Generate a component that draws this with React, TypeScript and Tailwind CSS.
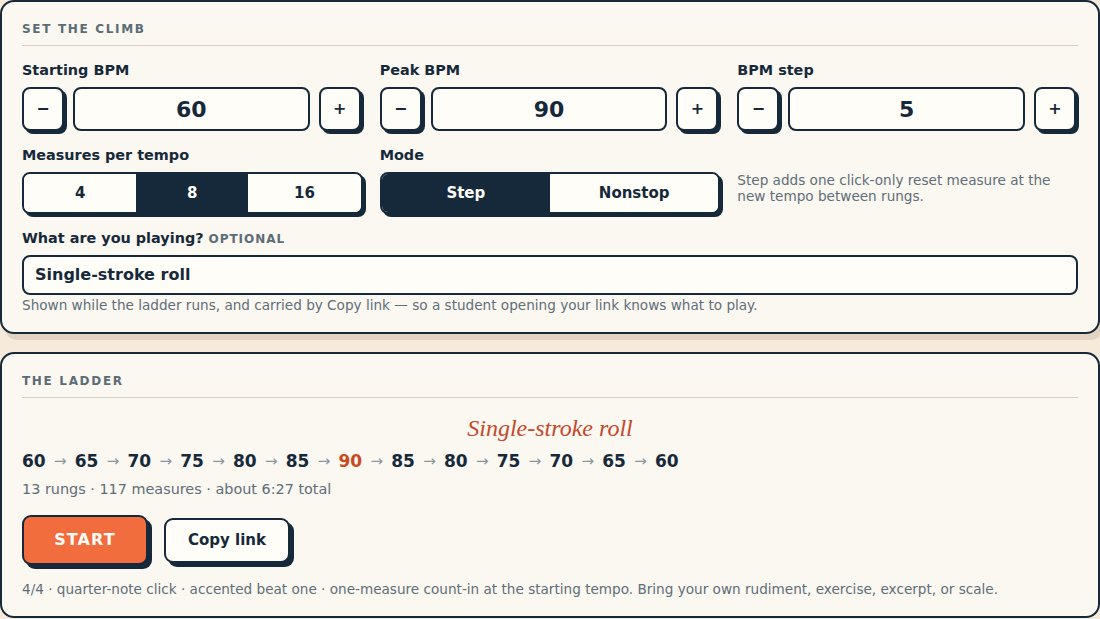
import { useState } from 'react';

const ink = 'text-[#16293a]';

function SectionHead({ title }: { title: string }) {
  return (
    <div className="border-b border-[#d8cfc3] pb-[9px]">
      <h2 className="text-[12px] font-bold uppercase leading-[14px] tracking-[0.14em] text-[#5b6c77]">{title}</h2>
    </div>
  );
}

function Label({ children }: { children: React.ReactNode }) {
  return <div className={`mb-[8px] h-[17px] text-[14.4px] font-bold leading-[17px] ${ink}`}>{children}</div>;
}

function Stepper({ label, value }: { label: string; value: number }) {
  return (
    <div>
      <Label>{label}</Label>
      <div className="mr-[2px] grid grid-cols-[42px_1fr_42px] gap-[9px]">
        <button className={`h-[44px] rounded-[8px] border-2 border-[#16293a] bg-[#fffdf8] text-[16px] font-bold shadow-[3px_3px_0_#16293a] ${ink}`}>
          −
        </button>
        <div className={`flex h-[44px] items-center justify-center rounded-[8px] border-2 border-[#16293a] bg-[#fffdf8] text-[22px] font-bold ${ink}`}>
          {value}
        </div>
        <button className={`h-[44px] rounded-[8px] border-2 border-[#16293a] bg-[#fffdf8] text-[16px] font-bold shadow-[3px_3px_0_#16293a] ${ink}`}>
          +
        </button>
      </div>
    </div>
  );
}

function Segmented({ options, active }: { options: string[]; active: string }) {
  return (
    <div className="flex h-[42px] overflow-hidden rounded-[8px] border-2 border-[#16293a] bg-[#fffdf8] shadow-[3px_3px_0_#16293a]">
      {options.map((o) => (
        <button
          key={o}
          className={`flex-1 text-[15px] font-bold ${o === active ? 'bg-[#16293a] text-[#fffdf8]' : `bg-[#fffdf8] ${ink}`}`}
        >
          {o}
        </button>
      ))}
    </div>
  );
}

export default function App() {
  const [piece] = useState('Single-stroke roll');
  const rungs = [60, 65, 70, 75, 80, 85, 90, 85, 80, 75, 70, 65, 60];

  return (
    <div className="min-h-screen bg-[#f6eadb] font-['DejaVu_Sans',sans-serif]">
      <div className="flex flex-col gap-[18px]">
        {/* Settings */}
        <section className="rounded-[14px] border-2 border-[#16293a] bg-[#fbf7f1] px-[20px] pb-[19px] pt-[20px] shadow-[4px_6px_0_rgba(90,60,30,0.13)]">
          <SectionHead title="Set the climb" />

          <div className="mt-[16px] grid grid-cols-3 gap-x-[17px] gap-y-[16px]">
            <Stepper label="Starting BPM" value={60} />
            <Stepper label="Peak BPM" value={90} />
            <Stepper label="BPM step" value={5} />

            <div>
              <Label>Measures per tempo</Label>
              <Segmented options={['4', '8', '16']} active="8" />
            </div>
            <div>
              <Label>Mode</Label>
              <Segmented options={['Step', 'Nonstop']} active="Step" />
            </div>
            <div>
              <div className="mb-[8px] h-[17px]" />
              <p className="pr-4 text-[13.6px] leading-[16px] text-[#5e6e78]">
                Step adds one click-only reset measure at the new tempo between rungs.
              </p>
            </div>
          </div>

          <div className="mt-[16px]">
            <Label>
              What are you playing?{' '}
              <span className="text-[12px] tracking-[0.08em] text-[#5b6c77]">OPTIONAL</span>
            </Label>
            <div className={`flex h-[40px] items-center rounded-[8px] border-2 border-[#16293a] bg-[#fffdf8] px-[11px] text-[16px] font-bold ${ink}`}>
              {piece}
            </div>
            <p className="mt-[2px] text-[13.6px] leading-[16px] text-[#5e6e78]">
              Shown while the ladder runs, and carried by Copy link — so a student opening your link knows what to play.
            </p>
          </div>
        </section>

        {/* Ladder */}
        <section className="rounded-[14px] border-2 border-[#16293a] bg-[#fbf7f1] px-[20px] pb-[19px] pt-[20px]">
          <SectionHead title="The ladder" />

          <div className="mt-[16px] text-center font-['Liberation_Serif',serif] text-[24px] italic leading-[28px] text-[#c2492a]">
            {piece}
          </div>

          <div className="mt-[8px] flex items-center gap-[8.25px] text-[17px] font-bold leading-[22px]">
            {rungs.map((r, i) => (
              <span key={i} className="flex items-center gap-[8.25px]">
                {i > 0 && <span className="text-[15px] font-normal text-[#8b979e]">→</span>}
                <span className={r === 90 ? 'text-[#c84a20]' : 'text-[#16293a]'}>{r}</span>
              </span>
            ))}
          </div>

          <p className="mt-[8px] text-[14.4px] leading-[18px] text-[#5e6e78]">
            13 rungs · 117 measures · about 6:27 total
          </p>

          <div className="mt-[17px] flex items-center gap-[16px]">
            <button className="h-[50px] w-[126px] rounded-[9px] border-2 border-[#16293a] bg-[#f26d3d] text-[16px] font-bold tracking-[0.07em] text-[#fffdf8] shadow-[4px_4px_0_#16293a]">
              START
            </button>
            <button className={`h-[45px] w-[126px] rounded-[9px] border-2 border-[#16293a] bg-[#fffdf8] text-[15px] font-bold shadow-[4px_4px_0_#16293a] ${ink}`}>
              Copy link
            </button>
          </div>

          <p className="mt-[16px] text-[13.6px] leading-[16px] text-[#5e6e78]">
            4/4 · quarter-note click · accented beat one · one-measure count-in at the starting tempo. Bring your own rudiment, exercise, excerpt, or scale.
          </p>
        </section>
      </div>
    </div>
  );
}
